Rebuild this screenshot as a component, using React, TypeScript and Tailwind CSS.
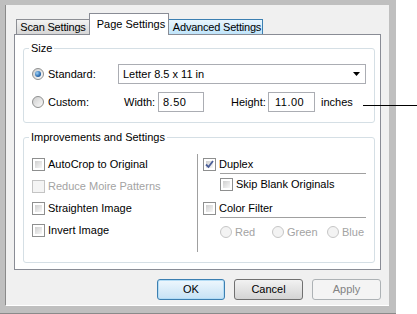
import React from 'react'

const Check = ({ checked = false, disabled = false }: { checked?: boolean; disabled?: boolean }) => (
  <div
    className={`w-[13px] h-[13px] shrink-0 border p-[2px] ${disabled ? 'border-[#c4c4c4] bg-[#f4f4f4]' : 'border-[#8e8f8f] bg-white'}`}
  >
    <div
      className={`w-full h-full relative ${disabled ? 'bg-[#f4f4f4]' : 'bg-gradient-to-br from-[#cfcfcf] to-[#f8f8f8]'}`}
    >
      {checked && (
        <svg viewBox="0 0 9 9" className="absolute -left-[1px] -top-[1px] w-[9px] h-[9px]">
          <path d="M1 4.5 L3.5 7 L8 1" fill="none" stroke="#4b5e98" strokeWidth="1.8" />
        </svg>
      )}
    </div>
  </div>
)

const Radio = ({ checked = false, disabled = false }: { checked?: boolean; disabled?: boolean }) => (
  <div
    className={`w-[12px] h-[12px] shrink-0 rounded-full border flex items-center justify-center ${
      disabled
        ? 'border-[#c6c6c6] bg-[#f3f3f3]'
        : 'border-[#8e8f8f] bg-gradient-to-br from-[#cfcfcf] to-[#fafafa]'
    }`}
  >
    {checked && (
      <div className="w-[6px] h-[6px] rounded-full bg-[radial-gradient(circle_at_35%_35%,#9fd3f7,#2a6bb0_60%,#163f73)]" />
    )}
  </div>
)

export default function App() {
  return (
    <div className="relative flex w-[417px] h-[314px] bg-white text-[11px] leading-[13px] text-black font-['Liberation_Sans',Arial,sans-serif]">
      {/* window frame */}
      <div className="w-[396px] h-[314px] bg-[#bfbfbf] pt-[5px] pl-[5px] pr-[7px] border-b border-b-[#8a8a8a]">
        <div className="w-[384px] h-[301px] bg-[#f0f0f0] border-l border-l-[#8a8a8a] border-b border-b-white pt-[8px] pl-[8px] pr-[8px]">
          {/* tabs */}
          <div className="flex items-end h-[21px] pl-[2px]">
            <div className="w-[74px] h-[15px] border border-b-0 border-[#8c8e94] bg-gradient-to-b from-[#f3f3f3] to-[#d6d6d6] flex items-center justify-center pt-[1px] tracking-[-0.2px]">
              Scan Settings
            </div>
            <div className="-ml-px w-[80px] h-[22px] -mb-px relative z-10 border border-b-0 border-[#898c95] bg-white flex items-start justify-center pt-[4px] pl-[4px]">
              Page Settings
            </div>
            <div className="-ml-px w-[95px] h-[15px] border border-b-0 border-[#3c7fb1] bg-gradient-to-b from-[#eaf6fd] to-[#bfe4fa] flex items-center justify-center pt-[1px] pl-[3px] tracking-[-0.2px]">
              Advanced Settings
            </div>
          </div>

          {/* tab panel */}
          <div className="w-[367px] h-[236px] border border-[#898c95] bg-white pl-[8px] pt-[7px]">
            <fieldset className="w-[352px] border border-[#d5dfe5] rounded-[3px] p-0">
              <legend className="ml-[5px] px-[2px]">Size</legend>
              <div className="pl-[8px] pt-[9px] pb-[10px]">
                <div className="flex items-center h-[20px]">
                  <div className="flex items-center gap-[4px] w-[86px]">
                    <Radio checked />
                    <span>Standard:</span>
                  </div>
                  <div className="w-[248px] h-[20px] border border-[#abadb3] bg-white flex items-center justify-between pl-[4px] pr-[5px]">
                    <span>Letter 8.5 x 11 in</span>
                    <svg width="7" height="4" viewBox="0 0 7 4">
                      <path d="M0 0 H7 L3.5 4 Z" fill="#000" />
                    </svg>
                  </div>
                </div>
                <div className="flex items-center h-[20px] mt-[8px]">
                  <div className="flex items-center gap-[4px] w-[92px]">
                    <Radio />
                    <span>Custom:</span>
                  </div>
                  <span className="w-[34px]">Width:</span>
                  <div className="w-[46px] h-[20px] border border-[#abadb3] bg-white flex items-center pl-[4px] tracking-[0.5px]">
                    8.50
                  </div>
                  <span className="ml-[27px] w-[37px]">Height:</span>
                  <div className="w-[47px] h-[20px] border border-[#abadb3] bg-white flex items-center pl-[6px] tracking-[0.5px]">
                    11.00
                  </div>
                  <span className="ml-[6px]">inches</span>
                </div>
              </div>
            </fieldset>

            <fieldset className="w-[352px] mt-[8px] border border-[#d5dfe5] rounded-[3px] p-0">
              <legend className="ml-[5px] px-[2px]">Improvements and Settings</legend>
              <div className="flex pl-[8px] pt-[9px] h-[118px]">
                <div className="w-[165px] flex flex-col">
                  <div className="flex items-center gap-[3px] h-[22px]">
                    <Check />
                    <span>AutoCrop to Original</span>
                  </div>
                  <div className="flex items-center gap-[3px] h-[22px] text-[#a3a3a3]">
                    <Check disabled />
                    <span>Reduce Moire Patterns</span>
                  </div>
                  <div className="flex items-center gap-[3px] h-[22px]">
                    <Check />
                    <span>Straighten Image</span>
                  </div>
                  <div className="flex items-center gap-[3px] h-[22px]">
                    <Check />
                    <span>Invert Image</span>
                  </div>
                </div>
                <div className="w-px h-[98px] mt-[1px] bg-[#a0a0a0]" />
                <div className="flex flex-col pl-[5px] pt-[2px]">
                  <div className="flex items-center gap-[3px] h-[18px]">
                    <Check checked />
                    <span>Duplex</span>
                  </div>
                  <div className="ml-[17px] w-[146px] h-px bg-[#a0a0a0]" />
                  <div className="ml-[17px] flex items-center gap-[3px] h-[20px]">
                    <Check />
                    <span>Skip Blank Originals</span>
                  </div>
                  <div className="flex items-center gap-[3px] h-[18px] mt-[5px]">
                    <Check />
                    <span>Color Filter</span>
                  </div>
                  <div className="ml-[17px] w-[146px] h-px bg-[#a0a0a0]" />
                  <div className="ml-[17px] flex items-center h-[18px] mt-[5px] text-[#a3a3a3]">
                    <div className="flex items-center gap-[3px] w-[52px]">
                      <Radio disabled />
                      <span>Red</span>
                    </div>
                    <div className="flex items-center gap-[3px] w-[55px]">
                      <Radio disabled />
                      <span>Green</span>
                    </div>
                    <div className="flex items-center gap-[3px]">
                      <Radio disabled />
                      <span>Blue</span>
                    </div>
                  </div>
                </div>
              </div>
            </fieldset>
          </div>

          {/* buttons */}
          <div className="flex justify-end gap-[9px] mt-[9px]">
            <button className="w-[68px] h-[21px] rounded-[3px] border border-[#3c7fb1] bg-gradient-to-b from-[#eef7fd] to-[#c6e2f5] shadow-[inset_0_0_0_1px_#b3dcf5]">
              OK
            </button>
            <button className="w-[69px] h-[21px] rounded-[3px] border border-[#707070] bg-gradient-to-b from-[#f2f2f2] to-[#d4d4d4]">
              Cancel
            </button>
            <button className="w-[69px] h-[21px] rounded-[3px] border border-[#adb2b5] bg-[#f4f4f4] text-[#838383]">
              Apply
            </button>
          </div>
        </div>
      </div>

      {/* annotation leader line */}
      <div className="absolute left-[363px] top-[105px] w-[54px] h-px bg-black" />
    </div>
  )
}
